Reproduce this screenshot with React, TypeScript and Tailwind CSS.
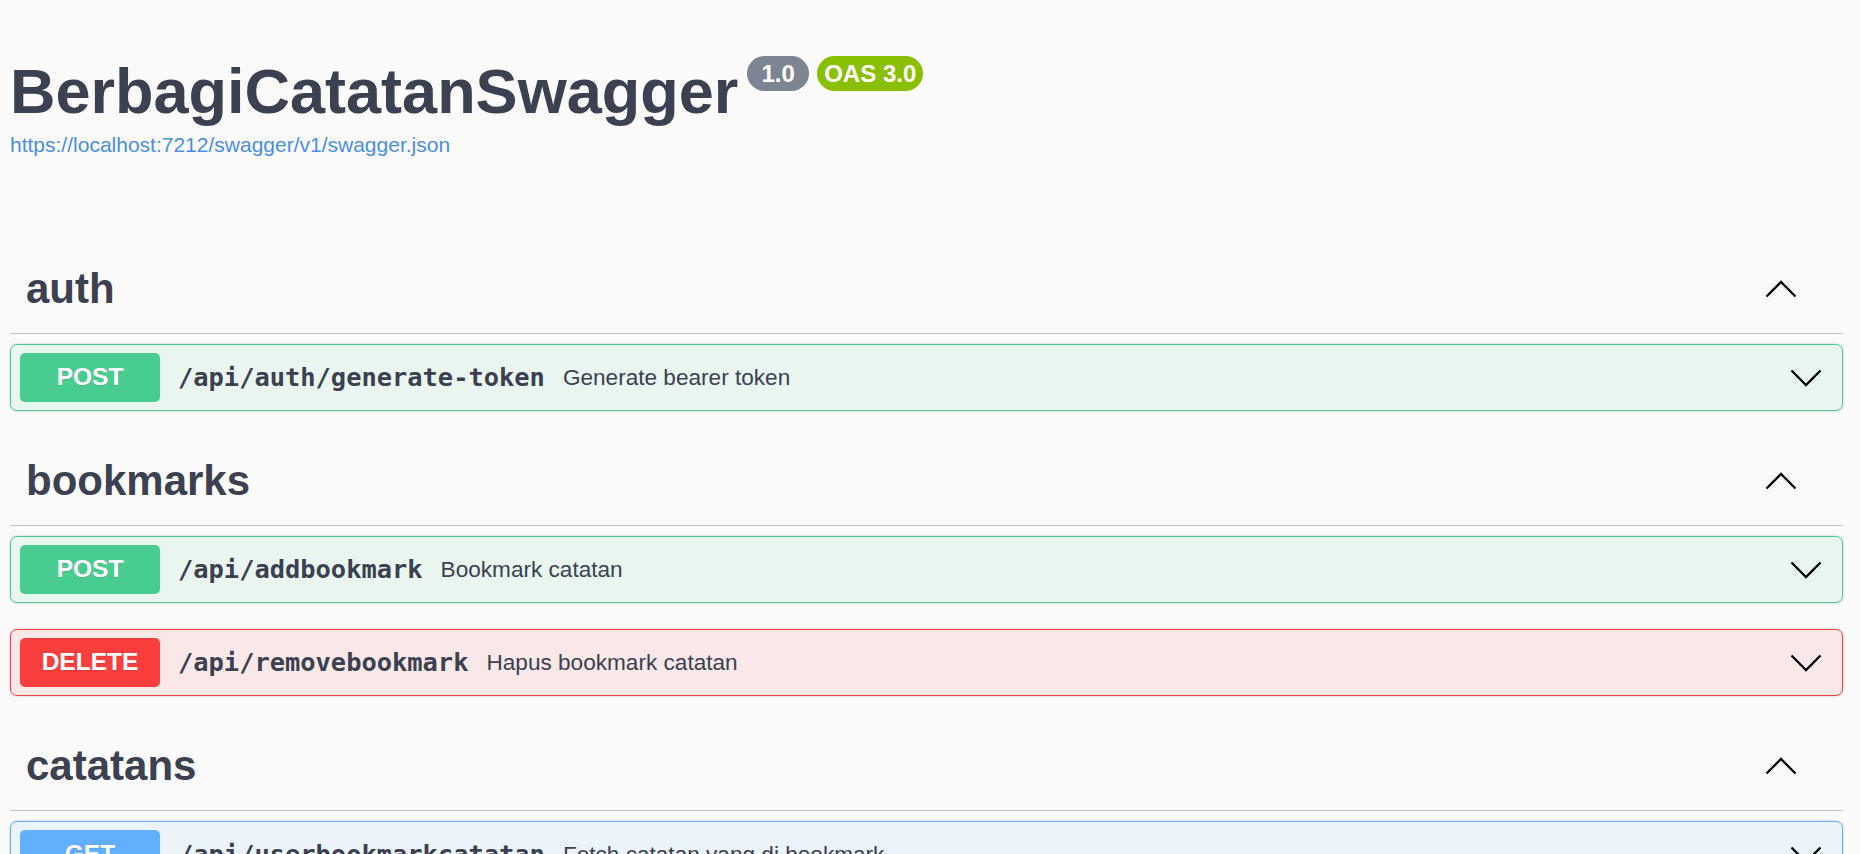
const sections = [
  {
    name: "auth",
    ops: [{ method: "POST", path: "/api/auth/generate-token", desc: "Generate bearer token" }],
  },
  {
    name: "bookmarks",
    ops: [
      { method: "POST", path: "/api/addbookmark", desc: "Bookmark catatan" },
      { method: "DELETE", path: "/api/removebookmark", desc: "Hapus bookmark catatan" },
    ],
  },
  {
    name: "catatans",
    ops: [{ method: "GET", path: "/api/userbookmarkcatatan", desc: "Fetch catatan yang di bookmark" }],
  },
];

const styles: Record<string, { box: string; badge: string }> = {
  POST: { box: "border-[#49cc90] bg-[#e8f6ef]", badge: "bg-[#49cc90]" },
  DELETE: { box: "border-[#f93e3e] bg-[#fae7e7]", badge: "bg-[#f93e3e]" },
  GET: { box: "border-[#61affe] bg-[#ebf3fb]", badge: "bg-[#61affe]" },
};

function Chevron({ up }: { up?: boolean }) {
  return (
    <svg width="32" height="18" viewBox="0 0 32 18" className="shrink-0">
      <polyline
        points={up ? "1.5,16.5 16,2 30.5,16.5" : "1.5,1.5 16,16 30.5,1.5"}
        fill="none"
        stroke="#000"
        strokeWidth="2.3"
      />
    </svg>
  );
}

function Operation({ method, path, desc }: { method: string; path: string; desc: string }) {
  const s = styles[method];
  return (
    <div
      className={`mb-[26px] flex h-[67px] items-center rounded-[7px] border pl-[9px] pr-[20px] shadow-[0_0_3px_rgba(0,0,0,0.19)] ${s.box}`}
    >
      <span
        className={`flex h-[49px] w-[140px] shrink-0 items-center justify-center rounded-[5px] text-[24.5px] font-bold text-white [text-shadow:0_1px_0_rgba(0,0,0,0.1)] ${s.badge}`}
      >
        {method}
      </span>
      <span className="px-[18px] font-['DejaVu_Sans_Mono',monospace] text-[25.4px] font-bold text-[#3b4151]">
        {path}
      </span>
      <span className="text-[22.6px] text-[#3b4151]">{desc}</span>
      <span className="ml-auto">
        <Chevron />
      </span>
    </div>
  );
}

export default function App() {
  return (
    <div className="min-h-screen bg-[#fafafa] font-['Liberation_Sans',Arial,sans-serif] text-[#3b4151]">
      <div className="pl-[10px] pr-[17px] pt-[55px]">
        <div className="flex items-start">
          <h2 className="text-[63px] font-bold leading-[72px]">BerbagiCatatanSwagger</h2>
          <span className="ml-[9px] mt-[1px] flex h-[35px] w-[62px] items-center justify-center rounded-full bg-[#7d8492] text-[24px] font-bold text-white">
            1.0
          </span>
          <span className="ml-[8px] mt-[1px] flex h-[35px] items-center rounded-full bg-[#89bf04] px-[7px] text-[24px] font-bold text-white">
            OAS 3.0
          </span>
        </div>
        <a className="mt-[6px] block text-[21px] leading-[24px] text-[#4990e2]" href="#">
          https://localhost:7212/swagger/v1/swagger.json
        </a>

        <div className="mt-[88px]">
          {sections.map((sec) => (
            <section key={sec.name}>
              <div className="flex h-[89px] items-center justify-between border-b border-[#c4c5c8] pl-[16px] pr-[46px]">
                <h3 className="text-[42px] font-bold leading-[48px]">{sec.name}</h3>
                <Chevron up />
              </div>
              <div className="pt-[10px]">
                {sec.ops.map((op) => (
                  <Operation key={op.path} {...op} />
                ))}
              </div>
            </section>
          ))}
        </div>
      </div>
    </div>
  );
}
